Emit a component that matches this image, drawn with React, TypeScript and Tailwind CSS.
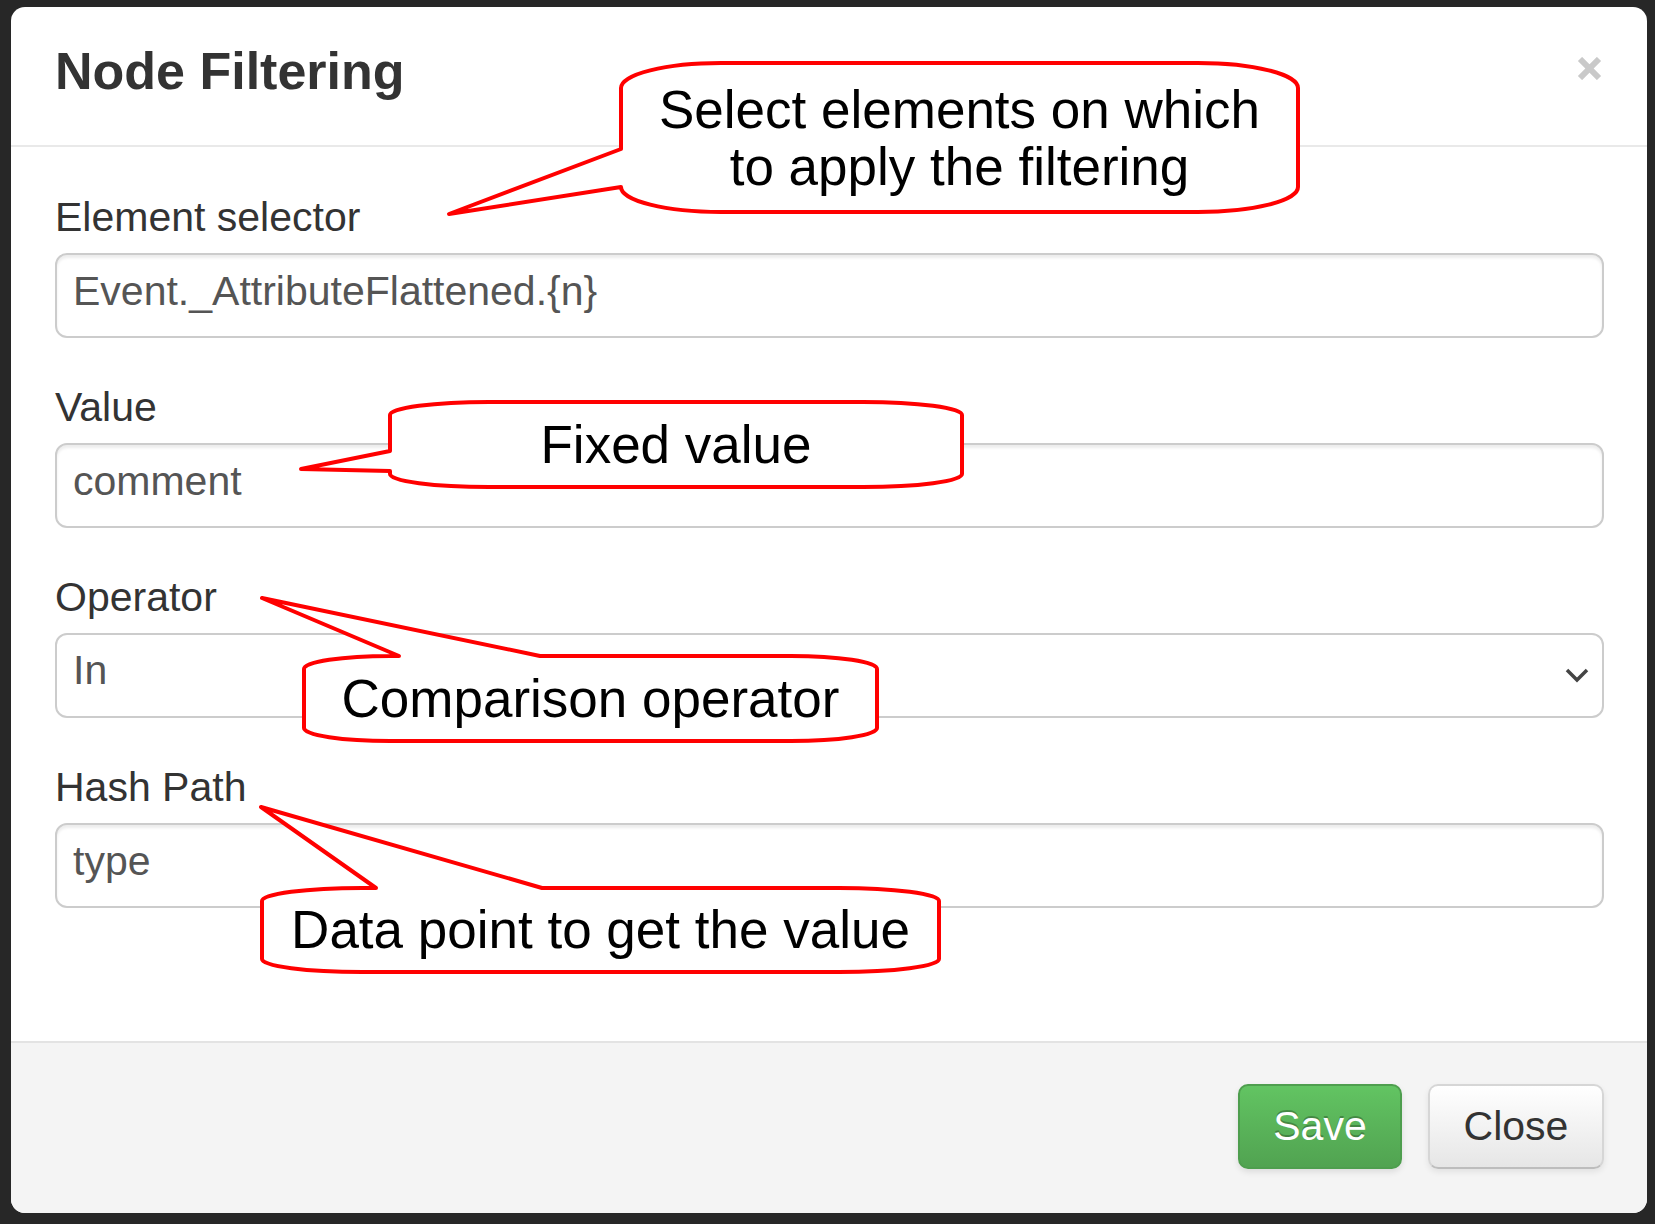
const fields = [
  { label: "Element selector", value: "Event._AttributeFlattened.{n}" },
  { label: "Value", value: "comment" },
];

const Callouts = () => {
  return (
    <>
      <svg
        className="absolute left-0 top-0 w-[1655px] h-[1224px] pointer-events-none"
        viewBox="0 0 1655 1224"
        fill="white"
        stroke="#ff0000"
        strokeWidth="4"
        strokeLinejoin="round"
      >
        {/* Element selector */}
        <path d="M721 63 H1198 A100 25 0 0 1 1298 88 V187 A100 25 0 0 1 1198 212 H721 A100 25 0 0 1 621 187 L449 214 L621 149 V88 A100 25 0 0 1 721 63 Z" />
        {/* Value */}
        <path d="M489 402 H863 A99 13 0 0 1 962 415 V474 A99 13 0 0 1 863 487 H489 A99 13 0 0 1 390 474 V471 L301 469 L390 451 V415 A99 13 0 0 1 489 402 Z" />
        {/* Operator */}
        <path d="M540 656 H791 A86 13 0 0 1 877 669 V728 A86 13 0 0 1 791 741 H390 A86 13 0 0 1 304 728 V669 A86 13 0 0 1 390 656 H399 L262 598 Z" />
        {/* Hash path */}
        <path d="M542 888 H839 A100 13 0 0 1 939 901 V959 A100 13 0 0 1 839 972 H362 A100 13 0 0 1 262 959 V901 A100 13 0 0 1 362 888 H376 L261 807 Z" />
      </svg>

      <div className="absolute left-[621px] top-[63px] w-[677px] h-[149px] flex flex-col items-center justify-center text-[53px] leading-[57px] text-black">
        <span>Select elements on which</span>
        <span>to apply the filtering</span>
      </div>
      <div className="absolute left-[390px] top-[402px] w-[572px] h-[85px] flex items-center justify-center text-[53px] text-black">
        Fixed value
      </div>
      <div className="absolute left-[304px] top-[656px] w-[573px] h-[85px] flex items-center justify-center text-[53px] text-black">
        Comparison operator
      </div>
      <div className="absolute left-[262px] top-[888px] w-[677px] h-[84px] flex items-center justify-center text-[53px] text-black">
        Data point to get the value
      </div>
    </>
  );
};

export default function App() {
  return (
    <div className="relative w-[1655px] h-[1224px] bg-[#272727] pt-[7px] pl-[11px] overflow-hidden font-['Liberation_Sans',Arial,sans-serif]">
      <div className="w-[1636px] h-[1206px] bg-white rounded-[14px] flex flex-col overflow-hidden">
        {/* Header */}
        <div className="h-[140px] shrink-0 border-b-2 border-[#e9e9e9] flex justify-between items-start pl-[44px] pr-[45px]">
          <h3 className="pt-[36px] text-[52px] leading-[57px] font-bold text-[#333]">
            Node Filtering
          </h3>
          <svg className="mt-[50px]" width="25" height="23" viewBox="0 0 25 23">
            <path d="M3 2 L22 21 M22 2 L3 21" stroke="#c9c9c9" strokeWidth="6" />
          </svg>
        </div>

        {/* Body */}
        <div className="flex-1 pt-[46px] pl-[44px] pr-[43px] flex flex-col gap-[45px]">
          {fields.map((f) => (
            <div key={f.label}>
              <label className="block text-[41px] leading-[49px] mb-[11px] text-[#333]">
                {f.label}
              </label>
              <input
                readOnly
                value={f.value}
                className="w-full h-[85px] border-2 border-[#cccccc] rounded-[12px] pl-[16px] pt-0 pb-[9px] text-[41px] text-[#555] bg-white outline-none shadow-[inset_0_3px_3px_rgba(0,0,0,0.075)]"
              />
            </div>
          ))}

          <div>
            <label className="block text-[41px] leading-[49px] mb-[11px] text-[#333]">
              Operator
            </label>
            <div className="w-full h-[85px] border-2 border-[#cccccc] rounded-[12px] pl-[16px] pr-[13px] flex items-center justify-between text-[41px] text-[#555] bg-white">
              <span className="mb-[9px]">In</span>
              <svg width="24" height="15" viewBox="0 0 24 15">
                <path d="M2 2 L12 12 L22 2" fill="none" stroke="#444" strokeWidth="3.5" />
              </svg>
            </div>
          </div>

          <div>
            <label className="block text-[41px] leading-[49px] mb-[11px] text-[#333]">
              Hash Path
            </label>
            <input
              readOnly
              value="type"
              className="w-full h-[85px] border-2 border-[#cccccc] rounded-[12px] pl-[16px] pt-0 pb-[9px] text-[41px] text-[#555] bg-white outline-none shadow-[inset_0_3px_3px_rgba(0,0,0,0.075)]"
            />
          </div>
        </div>

        {/* Footer */}
        <div className="h-[172px] shrink-0 border-t-2 border-[#e3e3e3] bg-[#f4f4f4] flex items-center justify-end gap-[26px] pr-[43px] pb-[3px]">
          <button className="w-[164px] h-[85px] rounded-[10px] border-2 border-[#4e9e4e] bg-linear-to-b from-[#62c462] to-[#51a351] text-white text-[41px] [text-shadow:0_-2px_0_rgba(0,0,0,0.25)] shadow-[0_3px_6px_rgba(0,0,0,0.1)]">
            Save
          </button>
          <button className="w-[176px] h-[85px] rounded-[10px] border-2 border-[#d6d6d6] border-b-[#bdbdbd] bg-linear-to-b from-white to-[#e6e6e6] text-[#333] text-[41px] shadow-[0_3px_6px_rgba(0,0,0,0.08)]">
            Close
          </button>
        </div>
      </div>

      <Callouts />
    </div>
  );
}
